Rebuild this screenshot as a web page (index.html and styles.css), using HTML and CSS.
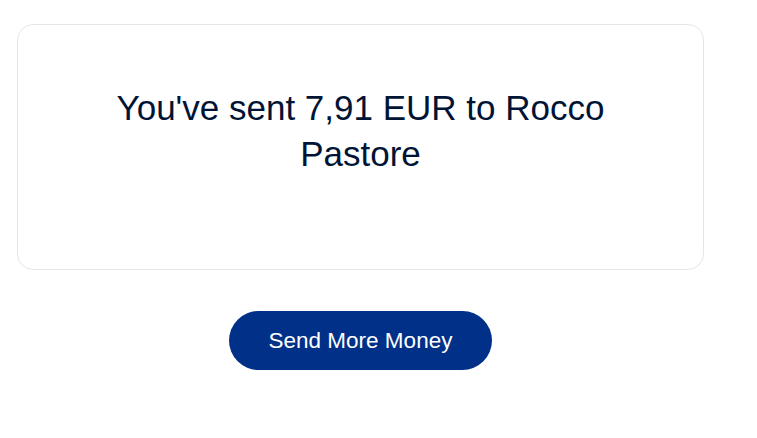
FILE: index.html
```html
<!DOCTYPE html>
<html lang="en">
<head>
    <meta charset="UTF-8">
    <meta name="viewport" content="width=device-width, initial-scale=1.0">
    <title>Payment sent</title>
    <link rel="stylesheet" href="styles.css">
</head>
<body>
    <div class="page">
        <div class="card">
            <h1 class="sent_message">You've sent 7,91 EUR to Rocco Pastore</h1>
        </div>

        <div class="actions">
            <button class="send_more">Send More Money</button>
        </div>
    </div>
</body>
</html>
```

FILE: styles.css
```css
body{
    margin: 0;
    background-color: white;
    font-family: "Liberation Sans", Arial, sans-serif;
}

.page{
    width: 687px;
    padding: 24px 0 0 17px;
}

.card{
    border: 1px solid #e6e6e6;
    border-radius: 16px;
    padding: 60px 90px 92px;
}

.sent_message{
    margin: 0;
    font-size: 35px;
    font-weight: normal;
    line-height: 46px;
    text-align: center;
    color: #001435;
}

.actions{
    display: flex;
    justify-content: center;
    padding-top: 41px;
}

.send_more{
    width: 263px;
    height: 59px;
    border: none;
    border-radius: 30px;
    background-color: #003087;
    color: white;
    font-family: "Liberation Sans", Arial, sans-serif;
    font-size: 22.5px;
    cursor: pointer;
}
```
